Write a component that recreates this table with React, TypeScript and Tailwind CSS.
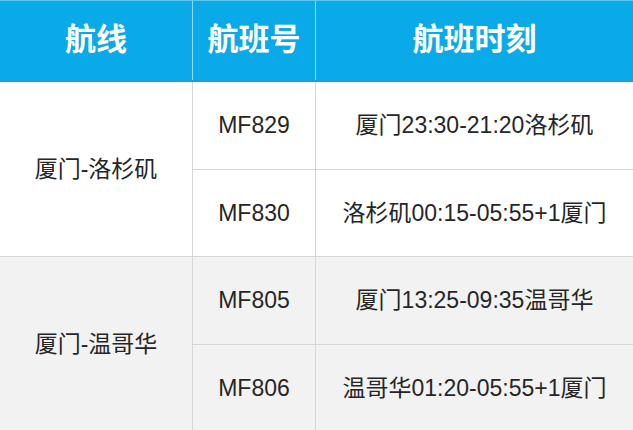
import React from "react";

const groups = [
  {
    route: "厦门-洛杉矶",
    bg: "bg-white",
    flights: [
      { no: "MF829", time: "厦门23:30-21:20洛杉矶" },
      { no: "MF830", time: "洛杉矶00:15-05:55+1厦门" },
    ],
  },
  {
    route: "厦门-温哥华",
    bg: "bg-[#f2f2f2]",
    flights: [
      { no: "MF805", time: "厦门13:25-09:35温哥华" },
      { no: "MF806", time: "温哥华01:20-05:55+1厦门" },
    ],
  },
];

const font = {
  fontFamily: '"Liberation Sans", "Noto Sans CJK SC", sans-serif',
};

export default function App() {
  return (
    <div className="w-[633px] h-[430px] overflow-hidden bg-white text-[#262626]" style={font}>
      {/* header */}
      <div className="grid grid-cols-[193px_123px_1fr] h-[82px] bg-[#0aa9e8] border-t border-[#5cc9f0] border-b-2 border-b-[#1c9fd6]">
        <div className="flex items-center justify-center border-r border-[#8fdcf5] text-white text-[31px] font-bold">
          航线
        </div>
        <div className="flex items-center justify-center border-r border-[#8fdcf5] text-white text-[31px] font-bold">
          航班号
        </div>
        <div className="flex items-center justify-center text-white text-[31px] font-bold">
          航班时刻
        </div>
      </div>

      {/* body */}
      {groups.map((g, gi) => (
        <div
          key={g.route}
          className={`grid grid-cols-[193px_123px_1fr] grid-rows-[87px_87px] ${g.bg} ${
            gi > 0 ? "border-t border-[#d6d6d6]" : ""
          }`}
        >
          <div className="row-span-2 flex items-center justify-center border-r border-[#d6d6d6] text-[23px]">
            {g.route}
          </div>
          {g.flights.map((f, fi) => (
            <React.Fragment key={f.no}>
              <div
                className={`flex items-center justify-center border-r border-[#d6d6d6] text-[23px] ${
                  fi > 0 ? "border-t" : ""
                }`}
              >
                {f.no}
              </div>
              <div
                className={`flex items-center justify-center border-[#d6d6d6] text-[23px] ${
                  fi > 0 ? "border-t" : ""
                }`}
              >
                {f.time}
              </div>
            </React.Fragment>
          ))}
        </div>
      ))}
    </div>
  );
}
